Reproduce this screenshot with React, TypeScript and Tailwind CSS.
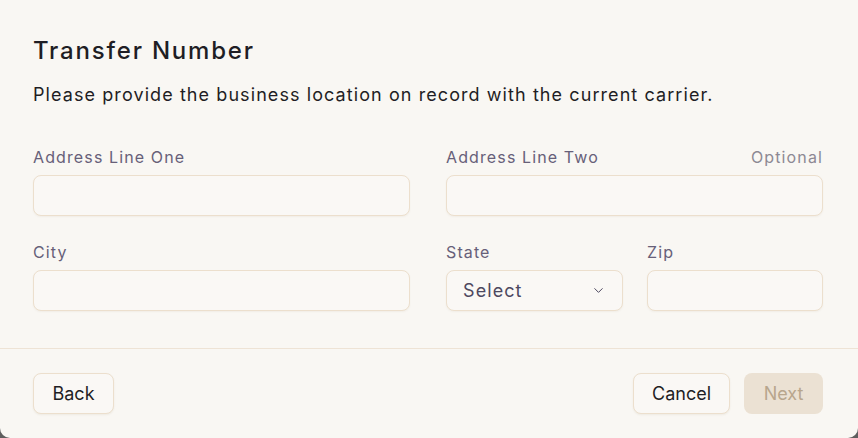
import { ChevronDown } from "lucide-react";

const font = { fontFamily: "'Inter', 'Noto Sans', sans-serif" };

function Field({ label, extra, className = "" }: { label: string; extra?: string; className?: string }) {
  return (
    <div className={`flex flex-col ${className}`}>
      <div className="flex h-[22px] items-center justify-between tracking-[0.07em]">
        <span className="text-[16px] text-[#676079]">{label}</span>
        {extra && <span className="text-[16px] text-[#8d8993]">{extra}</span>}
      </div>
      <input className="mt-[7px] h-[41px] w-full rounded-[8px] border border-[#ecdfcd] bg-[#faf8f5] px-4 shadow-[0_1px_2px_rgba(120,90,40,0.06)] outline-none" />
    </div>
  );
}

export default function App() {
  return (
    <div className="h-[438px] w-[858px] bg-[#5e5e5e]" style={font}>
      <div className="flex h-full flex-col rounded-b-[10px] bg-[#f9f7f3]">
        <div className="pl-[33px] pr-[35px] pt-[34px]">
          <h1 className="text-[24px] font-medium leading-[34px] tracking-[0.075em] text-[#1f1e24]">Transfer Number</h1>
          <p className="mt-[13px] text-[18px] leading-[28px] tracking-[0.06em] text-[#1f1e24]">
            Please provide the business location on record with the current carrier.
          </p>

          <div className="mt-[37px] grid grid-cols-2 gap-x-[36px] gap-y-[25px]">
            <Field label="Address Line One" />
            <Field label="Address Line Two" extra="Optional" />
            <Field label="City" />
            <div className="flex gap-[24px]">
              <div className="flex w-[177px] flex-col">
                <div className="flex h-[22px] items-center tracking-[0.07em]">
                  <span className="text-[16px] text-[#676079]">State</span>
                </div>
                <button className="mt-[7px] flex h-[41px] items-center justify-between rounded-[8px] border border-[#ecdfcd] bg-[#faf8f5] pl-4 pr-4 text-[18px] tracking-[0.06em] text-[#4d4860] shadow-[0_1px_2px_rgba(120,90,40,0.06)]">
                  Select
                  <ChevronDown size={15} strokeWidth={1.6} className="text-[#4d4860]" />
                </button>
              </div>
              <Field label="Zip" className="flex-1" />
            </div>
          </div>
        </div>

        <div className="mt-[37px] border-t border-[#eee3d5]" />

        <div className="flex items-center justify-between pl-[33px] pr-[35px] pt-[24px]">
          <button className="h-[41px] w-[81px] rounded-[8px] border border-[#ecdfcd] bg-[#faf8f5] text-[18px] text-[#1f1e24] shadow-[0_1px_2px_rgba(120,90,40,0.08)]">
            Back
          </button>
          <div className="flex gap-[14px]">
            <button className="h-[41px] w-[97px] rounded-[8px] border border-[#ecdfcd] bg-[#faf8f5] text-[18px] text-[#1f1e24] shadow-[0_1px_2px_rgba(120,90,40,0.08)]">
              Cancel
            </button>
            <button className="h-[41px] w-[79px] rounded-[8px] bg-[#ebe1d3] text-[18px] text-[#b8a68d]">
              Next
            </button>
          </div>
        </div>
      </div>
    </div>
  );
}
